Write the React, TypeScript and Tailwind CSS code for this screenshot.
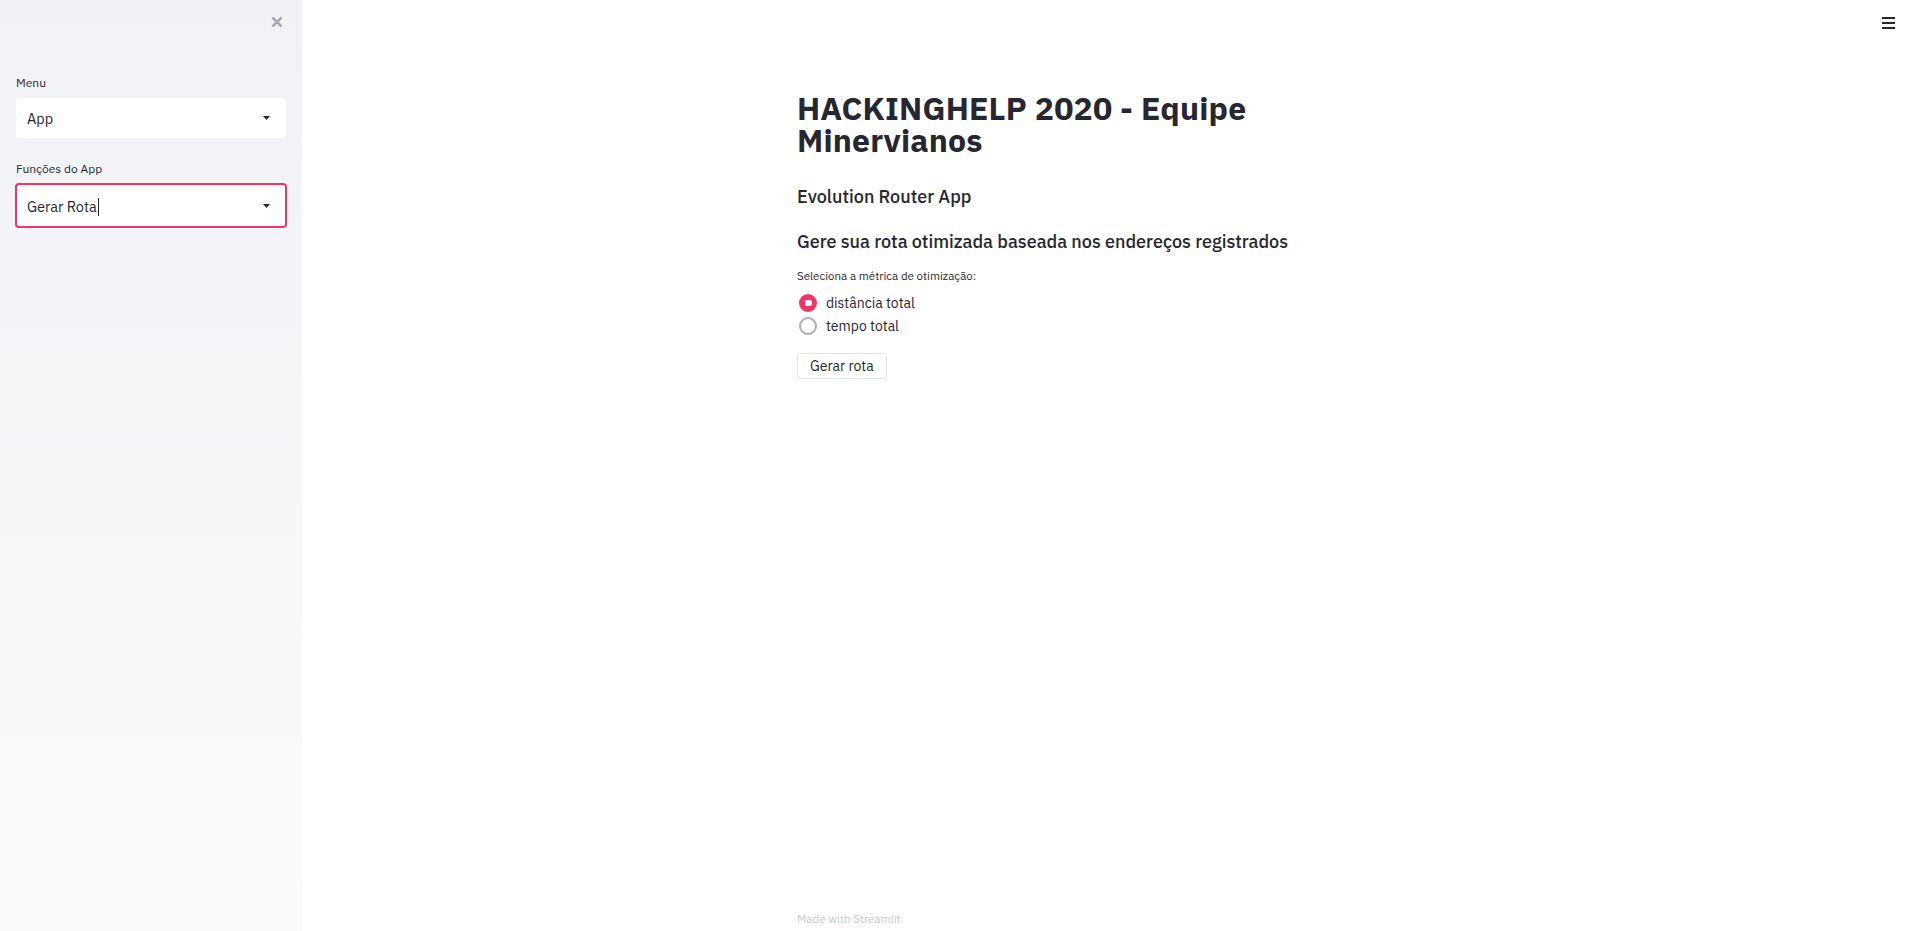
import React from "react";

const font = { fontFamily: '"IBM Plex Sans", "Noto Sans", "Open Sans", sans-serif' };

function Caret() {
  return (
    <svg width="7" height="4" viewBox="0 0 7 4" className="shrink-0">
      <path d="M0 0 H7 L3.5 4 Z" fill="#262730" />
    </svg>
  );
}

export default function App() {
  return (
    <div className="flex h-[931px] w-full overflow-hidden bg-white text-[#262730]" style={font}>
      <aside className="relative w-[302px] shrink-0 bg-gradient-to-b from-[#f0f2f6] to-[#fafafa] px-4 pt-[74px]">
        <button className="absolute right-[18px] top-[15px] flex h-[14px] w-[14px] items-center justify-center">
          <svg width="12" height="12" viewBox="0 0 12 12">
            <path d="M1.5 1.5 L10.5 10.5 M10.5 1.5 L1.5 10.5" stroke="#a6a9b4" strokeWidth="2.6" strokeLinecap="butt" />
          </svg>
        </button>
        <div className="text-[12px] leading-[18px]">Menu</div>
        <div className="mt-[6px] flex h-[40px] w-[270px] items-center justify-between rounded-[3px] bg-white pl-[11px] pr-[16px]">
          <span className="pt-[2px] text-[14.5px]">App</span>
          <Caret />
        </div>
        <div className="mt-[22px] text-[12px] leading-[18px]">Funções do App</div>
        <div className="-ml-px mt-[5px] flex h-[45px] w-[272px] items-center justify-between rounded-[4px] border-2 border-[#f63366] bg-white pl-[10px] pr-[15px]">
          <span className="flex items-center pt-[2px] text-[14.5px]">
            Gerar Rota<span className="ml-px inline-block h-[18px] w-px bg-[#262730]" />
          </span>
          <Caret />
        </div>
      </aside>

      <main className="relative flex flex-1 flex-col">
        <button className="absolute right-[24px] top-[17px] flex flex-col gap-[3.5px]">
          <span className="block h-[1.5px] w-[13px] bg-[#262730]" />
          <span className="block h-[1.5px] w-[13px] bg-[#262730]" />
          <span className="block h-[1.5px] w-[13px] bg-[#262730]" />
        </button>
        <div className="mx-auto w-[627px] flex-1 pt-[92px]">
          <h1 className="text-[32px] font-bold leading-[32px] tracking-[0.2px]">
            HACKINGHELP 2020 - Equipe
            <br />
            Minervianos
          </h1>
          <h3 className="mt-[29px] text-[18px] font-medium leading-[24px]">Evolution Router App</h3>
          <h3 className="mt-[21px] text-[18px] font-medium leading-[24px]">
            Gere sua rota otimizada baseada nos endereços registrados
          </h3>
          <div className="mt-[14px] text-[11.5px] leading-[16px]">Seleciona a métrica de otimização:</div>
          <div className="mt-[10px] flex flex-col gap-[5px]">
            <label className="flex h-[18px] items-center gap-[9px] pl-[2px] text-[14px]">
              <span className="flex h-[18px] w-[18px] items-center justify-center rounded-full bg-[#f63366]">
                <span className="block h-[6px] w-[7px] rounded-[2px] bg-white" />
              </span>
              distância total
            </label>
            <label className="flex h-[18px] items-center gap-[9px] pl-[2px] text-[14px]">
              <span className="block h-[18px] w-[18px] rounded-full border-2 border-[#a9adba] bg-white" />
              tempo total
            </label>
          </div>
          <button className="mt-[18px] flex h-[26px] items-center rounded-[3px] border border-[#e6e6ea] bg-white px-[12px] text-[14px]">
            Gerar rota
          </button>
        </div>
        <div className="mx-auto w-[627px] pb-[4px] text-[11.5px] leading-[16px] text-[#c4c7d4]">Made with Streamlit</div>
      </main>
    </div>
  );
}
